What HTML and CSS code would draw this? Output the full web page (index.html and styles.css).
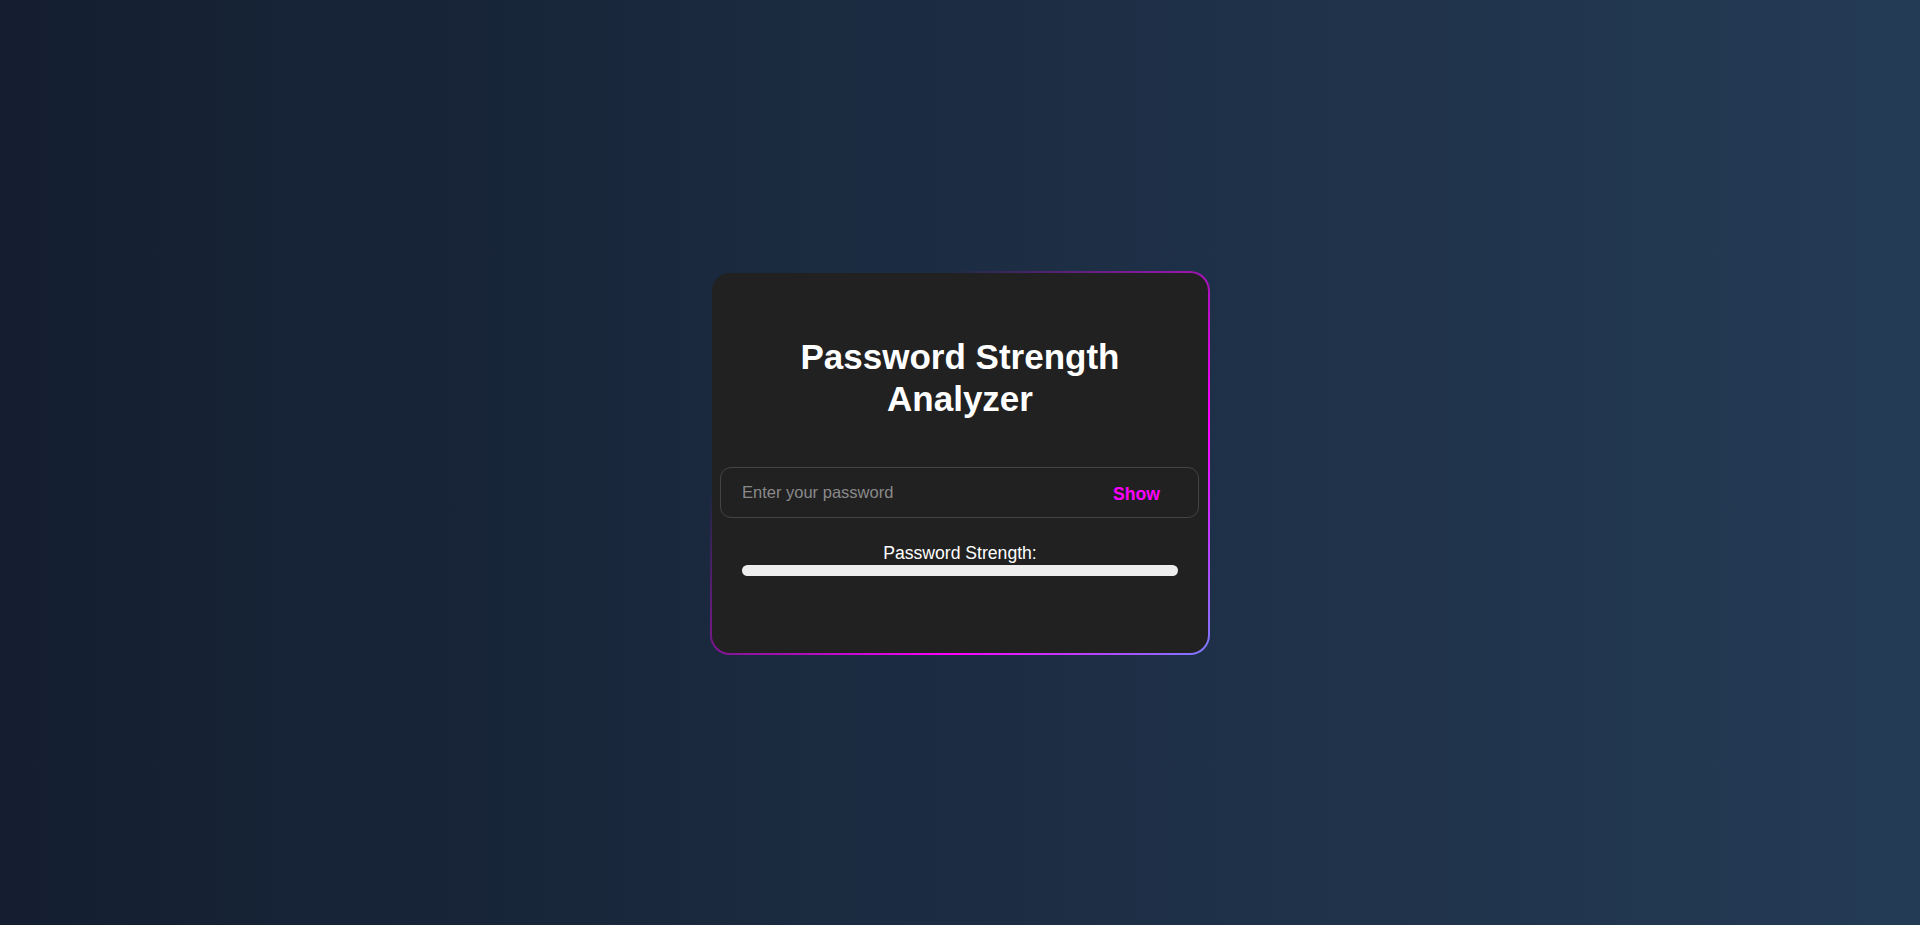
FILE: index.html
```html
<!DOCTYPE html>
<html lang="en">
<head>
<meta charset="UTF-8">
<title>Password Strength Analyzer</title>
<link rel="stylesheet" href="styles.css">
</head>
<body>
  <main class="card">
    <h1 class="title">Password Strength Analyzer</h1>
    <div class="field">
      <input class="field-input" type="password" placeholder="Enter your password">
      <button class="toggle" type="button">Show</button>
    </div>
    <div class="strength">
      <div class="strength-label">Password Strength:</div>
      <div class="strength-bar"></div>
    </div>
  </main>
</body>
</html>
```

FILE: styles.css
```css
* {
  box-sizing: border-box;
}

html, body {
  margin: 0;
  padding: 0;
}

body {
  min-height: 100vh;
  display: flex;
  align-items: center;
  justify-content: center;
  background: linear-gradient(to right, #141e30, #243b55);
  font-family: "Liberation Sans", Arial, sans-serif;
  color: #ffffff;
}

.card {
  width: 500px;
  padding: 63px 8px 77px;
  border: 2px solid transparent;
  border-radius: 20px;
  background:
    linear-gradient(#212121, #212121) padding-box,
    linear-gradient(138deg, rgba(255, 0, 255, 0) 26%, #ff00ff 72%, #7b7bff 100%) border-box;
}

.title {
  margin: 0;
  padding: 0 30px;
  font-size: 35px;
  line-height: 42px;
  font-weight: 700;
  text-align: center;
  color: #ffffff;
}

.field {
  position: relative;
  margin: 47px 1px 0 0;
}

.field-input {
  display: block;
  width: 100%;
  height: 51px;
  padding: 0 80px 0 21px;
  border: 1px solid #444444;
  border-radius: 11px;
  background: transparent;
  color: #ffffff;
  font-family: "Liberation Sans", Arial, sans-serif;
  font-size: 16.5px;
  outline: none;
}

.field-input::placeholder {
  color: #8a8a8a;
}

.toggle {
  position: absolute;
  right: 39px;
  top: 50%;
  transform: translateY(-38%);
  padding: 0;
  border: none;
  background: none;
  color: #ff00ff;
  font-family: "Liberation Sans", Arial, sans-serif;
  font-size: 17.6px;
  font-weight: 700;
  cursor: pointer;
}

.strength {
  margin-top: 25px;
  padding: 0 22px;
}

.strength-label {
  font-size: 17.6px;
  line-height: 21px;
  text-align: center;
  color: #ffffff;
}

.strength-bar {
  margin-top: 1px;
  height: 11px;
  border-radius: 6px;
  background: #eeeeee;
}
```
